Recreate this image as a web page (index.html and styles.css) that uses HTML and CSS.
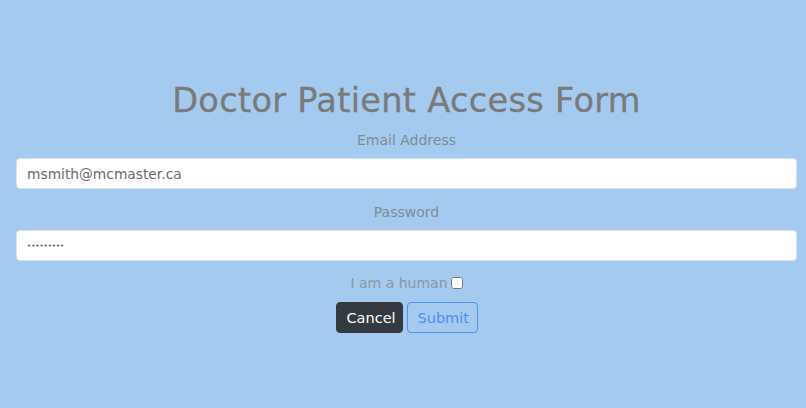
FILE: index.html
```html
<!DOCTYPE html>
<html>
<head>
<meta charset="utf-8">
<link rel="stylesheet" href="styles.css">
</head>
<body>
<main class="page">
  <h1 class="title">Doctor Patient Access Form</h1>
  <form class="form">
    <label class="label" for="email">Email Address</label>
    <input class="field" id="email" type="text" value="msmith@mcmaster.ca">
    <label class="label label-pass" for="pass">Password</label>
    <input class="field field-pass" id="pass" type="password" value="123456789">
    <div class="check-row">
      <span class="check-text">I am a human</span>
      <input class="check" type="checkbox">
    </div>
    <div class="buttons">
      <button type="button" class="btn btn-dark">Cancel</button>
      <button type="button" class="btn btn-outline">Submit</button>
    </div>
  </form>
</main>
</body>
</html>
```
FILE: styles.css
```css
html, body {
  margin: 0;
  padding: 0;
  height: 100%;
}
body {
  background: #a4cbef;
  font-family: "DejaVu Sans", "Open Sans", sans-serif;
  color: #808080;
}
.page {
  padding: 80px 9px 0 16px;
  text-align: center;
}
.title {
  margin: 0;
  font-size: 33.6px;
  font-weight: normal;
  line-height: 42px;
  color: #7a7a7a;
  letter-spacing: 0.3px;
  -webkit-text-stroke: 0.3px #7a7a7a;
}
.form {
  display: flex;
  flex-direction: column;
  align-items: stretch;
}
.label {
  display: block;
  font-size: 14px;
  line-height: 24px;
  margin-top: 6px;
  margin-bottom: 6px;
  color: #7f8b96;
}
.label-pass {
  margin-top: 11px;
}
.field {
  box-sizing: border-box;
  height: 31px;
  width: 100%;
  border: 1px solid #d6e2ee;
  border-radius: 4px;
  background: #fff;
  padding: 0 10px;
  font-family: inherit;
  font-size: 13.8px;
  color: #6b6b6b;
  outline: none;
}
.field-pass {
  font-size: 7px;
  letter-spacing: 0px;
  color: #555;
}
.check-row {
  margin-top: 13px;
  display: flex;
  justify-content: center;
  align-items: center;
  height: 18px;
  gap: 3px;
}
.check-text {
  font-size: 14px;
  color: #8b97a3;
}
.check {
  margin: 0;
  width: 12px;
  height: 12px;
}
.buttons {
  margin-top: 10px;
  display: flex;
  justify-content: center;
  gap: 4px;
}
.btn {
  box-sizing: border-box;
  height: 31px;
  border-radius: 4px;
  font-family: inherit;
  font-size: 14.5px;
  padding: 0 10px;
  cursor: pointer;
}
.btn-dark {
  background: #343a40;
  border: 1px solid #343a40;
  color: #fff;
  width: 67px;
}
.btn-outline {
  background: transparent;
  border: 1px solid #4f93ee;
  color: #4a8ef0;
  width: 71px;
}
```
